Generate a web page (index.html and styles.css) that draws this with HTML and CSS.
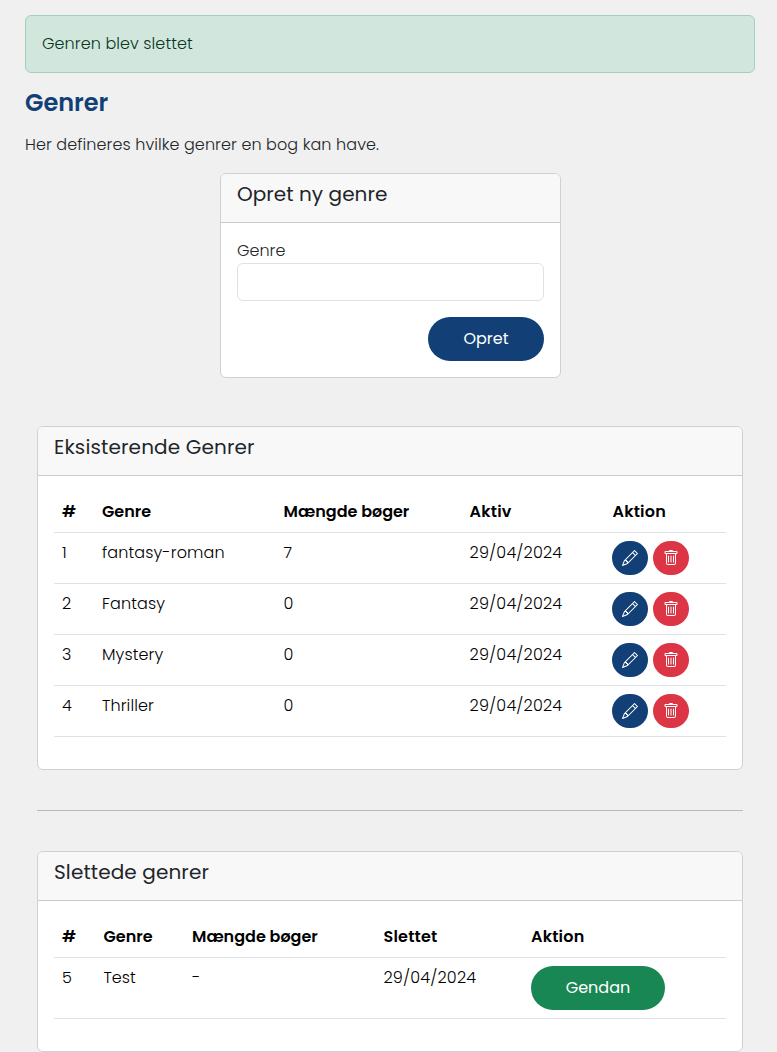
FILE: index.html
```
<!DOCTYPE html>
<html lang="da">
<head>
<meta charset="utf-8">
<title>Genrer</title>
<link rel="stylesheet" href="styles.css">
</head>
<body>
<svg class="sprite" aria-hidden="true">
  <symbol id="pencil" viewBox="0 0 16 16"><path d="M12.146.146a.5.5 0 0 1 .708 0l3 3a.5.5 0 0 1 0 .708l-10 10a.5.5 0 0 1-.168.11l-5 2a.5.5 0 0 1-.65-.65l2-5a.5.5 0 0 1 .11-.168zM11.207 2.5 13.5 4.793 14.793 3.5 12.5 1.207zm1.586 3L10.5 3.207 4 9.707V10h.5a.5.5 0 0 1 .5.5v.5h.5a.5.5 0 0 1 .5.5v.5h.293zm-9.761 5.175-.106.106-1.528 3.821 3.821-1.528.106-.106A.5.5 0 0 1 5 12.5V12h-.5a.5.5 0 0 1-.5-.5V11h-.5a.5.5 0 0 1-.468-.325"/></symbol>
  <symbol id="trash" viewBox="0 0 16 16"><path d="M5.5 5.5A.5.5 0 0 1 6 6v6a.5.5 0 0 1-1 0V6a.5.5 0 0 1 .5-.5m2.5 0a.5.5 0 0 1 .5.5v6a.5.5 0 0 1-1 0V6a.5.5 0 0 1 .5-.5m3 .5a.5.5 0 0 0-1 0v6a.5.5 0 0 0 1 0z"/><path d="M14.500 3a1 1 0 0 1-1 1H13v9a2 2 0 0 1-2 2H5a2 2 0 0 1-2-2V4h-.5a1 1 0 0 1-1-1V2a1 1 0 0 1 1-1H6a1 1 0 0 1 1-1h2a1 1 0 0 1 1 1h3.500a1 1 0 0 1 1 1zM4.118 4 4 4.059V13a1 1 0 0 0 1 1h6a1 1 0 0 0 1-1V4.059L11.882 4zM2.500 3h11V2h-11z"/></symbol>
</svg>
<main class="page">
  <div class="alert">Genren blev slettet</div>
  <h1 class="title">Genrer</h1>
  <p class="lead">Her defineres hvilke genrer en bog kan have.</p>

  <form class="card card-form">
    <div class="card-header"><h2 class="heading create">Opret ny genre</h2></div>
    <div class="card-body">
      <label class="label" for="genre">Genre</label>
      <input class="input" id="genre" type="text">
      <div class="actions"><button class="btn btn-primary" type="button">Opret</button></div>
    </div>
  </form>

  <section class="card card-list">
    <div class="card-header"><h2 class="heading existing">Eksisterende Genrer</h2></div>
    <div class="card-body">
      <table class="table">
        <colgroup><col class="a1"><col class="a2"><col class="a3"><col class="a4"><col></colgroup>
        <thead><tr><th>#</th><th>Genre</th><th>Mængde bøger</th><th class="wide">Aktiv</th><th class="wide action">Aktion</th></tr></thead>
        <tbody>
          <tr><td>1</td><td class="roman">fantasy-roman</td><td>7</td><td class="date">29/04/2024</td><td><div class="tools"><button class="icon-btn edit" aria-label="Rediger"><svg class="icon"><use href="#pencil"/></svg></button><button class="icon-btn delete" aria-label="Slet"><svg class="icon"><use href="#trash"/></svg></button></div></td></tr>
          <tr><td>2</td><td class="roman">Fantasy</td><td>0</td><td class="date">29/04/2024</td><td><div class="tools"><button class="icon-btn edit" aria-label="Rediger"><svg class="icon"><use href="#pencil"/></svg></button><button class="icon-btn delete" aria-label="Slet"><svg class="icon"><use href="#trash"/></svg></button></div></td></tr>
          <tr><td>3</td><td class="roman">Mystery</td><td>0</td><td class="date">29/04/2024</td><td><div class="tools"><button class="icon-btn edit" aria-label="Rediger"><svg class="icon"><use href="#pencil"/></svg></button><button class="icon-btn delete" aria-label="Slet"><svg class="icon"><use href="#trash"/></svg></button></div></td></tr>
          <tr><td>4</td><td class="roman">Thriller</td><td>0</td><td class="date">29/04/2024</td><td><div class="tools"><button class="icon-btn edit" aria-label="Rediger"><svg class="icon"><use href="#pencil"/></svg></button><button class="icon-btn delete" aria-label="Slet"><svg class="icon"><use href="#trash"/></svg></button></div></td></tr>
        </tbody>
      </table>
    </div>
  </section>

  <hr class="divider">

  <section class="card card-list">
    <div class="card-header"><h2 class="heading deleted">Slettede genrer</h2></div>
    <div class="card-body">
      <table class="table">
        <colgroup><col class="b1"><col class="b2"><col class="b3"><col class="b4"><col></colgroup>
        <thead><tr><th>#</th><th>Genre</th><th>Mængde bøger</th><th class="wide">Slettet</th><th class="wide">Aktion</th></tr></thead>
        <tbody>
          <tr><td>5</td><td>Test</td><td>-</td><td class="date">29/04/2024</td><td><button class="btn btn-success" type="button">Gendan</button></td></tr>
        </tbody>
      </table>
    </div>
  </section>
</main>
</body>
</html>
```
FILE: styles.css
```
* { box-sizing: border-box; }
html { overflow: hidden; }
body { margin: 0; background: #f0f0f0; color: #212529; font: 300 16px/24px Poppins, Inter, sans-serif; }
.sprite { position: absolute; width: 0; height: 0; }
.page { padding: 15px 22px 0 25px; }
.alert { padding: 16px; border: 1px solid #a3cfbb; border-radius: 6px; background: #d1e7dd; color: #0a3622; letter-spacing: .08px; }
.title { margin: 16px 0 0; font-size: 24px; line-height: 28px; font-weight: 600; color: #123f76; }
.lead { margin: 16px 0; letter-spacing: .085px; }
.card { background: #fff; border: 1px solid #d0d0d1; border-radius: 6px; overflow: hidden; }
.card-form { width: 341px; margin: 0 0 48px 195px; }
.card-list { width: 706px; margin-left: 12px; }
.card-header { padding: 8px 16px; background: #f8f8f8; border-bottom: 1px solid #cbcbcc; }
.heading { margin: 0 0 8px; font-size: 20px; line-height: 24px; font-weight: 400; }
.create { letter-spacing: .05px; }
.existing { letter-spacing: .14px; }
.deleted { letter-spacing: .11px; }
.card-body { padding: 16px; }
.label { display: block; }
.input { display: block; width: 100%; height: 38px; border: 1px solid #dee2e6; border-radius: 6px; background: #fff; font: inherit; padding: 6px 12px; }
.actions { display: flex; justify-content: flex-end; margin-top: 16px; }
.btn { display: block; height: 44px; padding: 0; border: 0; border-radius: 22px; color: #fff; font: 400 16px/44px Poppins, Inter, sans-serif; }
.btn-primary { width: 116px; background: #123f76; }
.btn-success { width: 134px; background: #198754; }
.table { width: 100%; margin-bottom: 16px; border-collapse: separate; border-spacing: 0; table-layout: fixed; color: #000; }
.table th, .table td { padding: 8px; border-bottom: 1px solid #dee2e6; text-align: left; vertical-align: top; white-space: nowrap; }
.table th { font-weight: 600; }
.table .wide { letter-spacing: .2px; }
.table .action { padding-left: 8.5px; }
.roman { letter-spacing: .12px; }
.date { letter-spacing: .18px; }
.a1 { width: 40px; } .a2 { width: 181.6px; } .a3 { width: 186px; } .a4 { width: 142.4px; }
.b1 { width: 41.5px; } .b2 { width: 88.5px; } .b3 { width: 191.5px; } .b4 { width: 147.5px; }
.tools { display: flex; gap: 5px; }
.icon-btn { display: flex; align-items: center; justify-content: center; width: 36px; height: 34px; padding: 0; border: 0; border-radius: 17px; color: #fff; }
.icon { width: 16px; height: 16px; fill: currentColor; }
.edit { background: #123f76; }
.delete { background: #dc3545; }
.divider { width: 706px; height: 1px; margin: 40px 0 40px 12px; border: 0; background: #b9babb; }
```
